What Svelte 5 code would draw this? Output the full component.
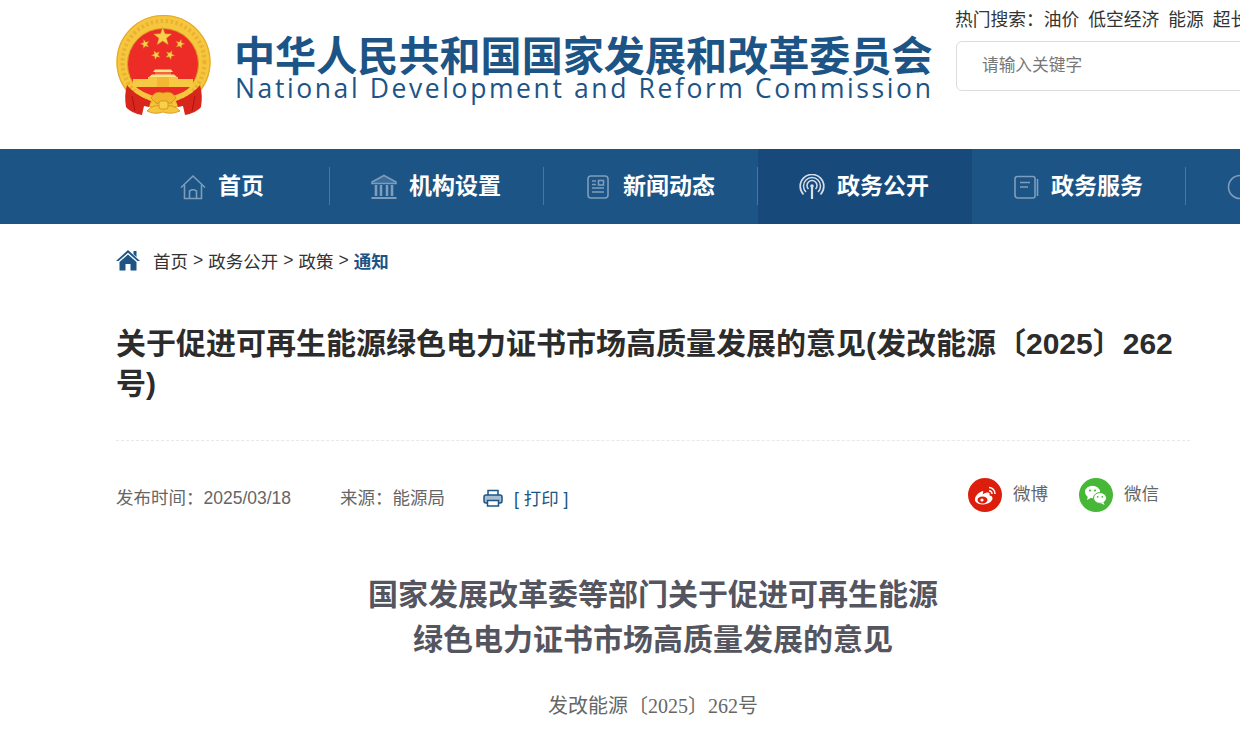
<script lang="ts">
  const hot = ['油价', '低空经济', '能源', '超长期特别国债'];
  const nav = [
    { label: '首页', icon: 'home' },
    { label: '机构设置', icon: 'bank' },
    { label: '新闻动态', icon: 'news' },
    { label: '政务公开', icon: 'signal', active: true },
    { label: '政务服务', icon: 'book' },
    { label: '互动交流', icon: 'chat' }
  ];
  const crumbs = ['首页', '政务公开', '政策'];
  const star = (cx: number, cy: number, r: number, turn = 0) => {
    let pts = '';
    for (let i = 0; i < 10; i++) {
      const a = ((i * 36 - 90 + turn) * Math.PI) / 180;
      const d = i % 2 ? r * 0.42 : r;
      pts += `${(cx + d * Math.cos(a)).toFixed(1)},${(cy + d * Math.sin(a)).toFixed(1)} `;
    }
    return pts;
  };
</script>

<div class="page">
  <header class="head">
    <svg class="emblem" viewBox="0 0 96 102" width="96" height="102">
      <!-- gold ring -->
      <circle cx="48.5" cy="48" r="47" fill="#f6c63d" />
      <circle cx="48.5" cy="48" r="46.5" fill="none" stroke="#e3a92d" stroke-width="1.2" />
      <circle cx="48.5" cy="48" r="41" fill="none" stroke="#eab233" stroke-width="4" stroke-dasharray="2.5 2.5" />
      <circle cx="48" cy="50" r="35.5" fill="#ee2c27" stroke="#d99a22" stroke-width="1" />
      <!-- stars -->
      <g fill="#f9d04a" stroke="#c98f1e" stroke-width="0.4">
        <polygon points={star(47.7, 23, 9.5)} />
        <polygon points={star(30, 30, 4.6, -15)} />
        <polygon points={star(65, 30, 4.6, 15)} />
        <polygon points={star(41, 41, 4.6, -25)} />
        <polygon points={star(55, 41, 4.6, 25)} />
      </g>
      <!-- gate -->
      <path d="M38 58 H58 L56 55.5 H40Z" fill="#fbe58c" />
      <rect x="40" y="58" width="16" height="3" fill="#ee6a3a" />
      <path d="M34 63 L37 60.5 H59 L62 63Z" fill="#fbe58c" />
      <rect x="33" y="63" width="30" height="2" fill="#f6c63d" />
      <path d="M18 65 H78 V73 H18Z" fill="#f7c843" />
      <rect x="42" y="63" width="12" height="10" fill="#f3b833" />
      <!-- ribbons -->
      <path d="M12 71 C15 75 24 83 36 87 L34 93 L29 92 L27 101 C21 100 14 97 11 93 Q9 81 12 71Z" fill="#d9261c" />
      <path d="M85 71 C82 75 73 83 61 87 L63 93 L68 92 L70 101 C76 100 83 97 86 93 Q88 81 85 71Z" fill="#d9261c" />
      <path d="M17 82 L20 97 M80 82 L77 97" stroke="#a9140f" stroke-width="1" fill="none" />
      <!-- knot and wheat -->
      <path d="M22 74 Q48 92 75 74 L78 78 Q48 98 19 78Z" fill="#f6c63d" />
      <path d="M36 84 Q40 76 48 79 Q57 76 61 84 L56 89 L41 89Z" fill="#f2b52d" stroke="#cf8f1c" stroke-width="0.8" />
      <path d="M32 97 Q38 89 48 93 Q58 89 65 97 Q56 101 48 98 Q40 101 32 97Z" fill="#f6c63d" stroke="#cf8f1c" stroke-width="0.8" />
      <rect x="44" y="87" width="9" height="8" rx="2" fill="#f9d04a" stroke="#cf8f1c" stroke-width="0.8" />
    </svg>
    <div class="brand">
      <div class="brand-cn">中华人民共和国国家发展和改革委员会</div>
      <div class="brand-en">National Development and Reform Commission</div>
    </div>
    <div class="search">
      <div class="hot">
        <span>热门搜索：</span>
        {#each hot as word}<span class="hot-word">{word}</span>{/each}
      </div>
      <div class="search-box">请输入关键字</div>
    </div>
  </header>

  <nav class="nav">
    {#each nav as item}
      <div class="nav-item" class:nav-item--active={item.active}>
        <svg class="nav-icon" class:nav-icon--active={item.active} viewBox="0 0 26 26" width="26" height="26" fill="none" stroke="currentColor" stroke-width="1.6">
          {#if item.icon === 'home'}
            <path d="M1 13.5 L13 2 L25 13.5" />
            <path d="M4.5 11 V24.5 H21.5 V11" />
            <path d="M9.5 24.5 V17 Q13 14.5 16.5 17 V24.5" />
          {:else if item.icon === 'bank'}
            <path d="M13 1.5 L25 8 V9.5 H1 V8Z" fill="currentColor" fill-opacity="0.35" />
            <path d="M5 11 V22 M10 11 V22 M16 11 V22 M21 11 V22" stroke-width="2.6" />
            <path d="M0.5 24 H25.5" stroke-width="2" />
          {:else if item.icon === 'news'}
            <rect x="3" y="2" width="20" height="22" rx="3" />
            <path d="M7 7 H11 M7 10.5 H11 M7 14 H19 M7 18 H19" />
            <rect x="13.5" y="6.5" width="5" height="4.5" />
          {:else if item.icon === 'signal'}
            <path d="M13 13 V25" stroke-width="2.2" />
            <circle cx="13" cy="12" r="1.8" fill="currentColor" stroke="none" />
            <path d="M9.5 15 A5 5 0 1 1 16.5 15" stroke-width="1.5" />
            <path d="M7 18 A8.5 8.5 0 1 1 19 18" stroke-width="1.5" />
            <path d="M4.5 20.5 A11.8 11.8 0 1 1 21.5 20.5" stroke-width="1.7" />
          {:else if item.icon === 'book'}
            <path d="M20 2.5 H4.5 Q2 2.5 2 5 V21 Q2 24 5 24 H20 Q22 24 22 22 V4.5 Q22 2.5 20 2.5Z" />
            <path d="M7 8.5 H17 M7 13 H15" />
            <path d="M24.5 5 V22" />
          {:else}
            <circle cx="13" cy="13" r="11.5" />
          {/if}
        </svg>
        <span class="nav-label">{item.label}</span>
      </div>
    {/each}
  </nav>

  <main class="main">
    <div class="crumbs">
      <svg class="crumb-home" viewBox="0 0 24 22" width="24" height="22">
        <path d="M12 1 L24 12 L21.5 12 L12 3.8 L2.5 12 L0 12Z" fill="#1c5486" />
        <path d="M17.5 2 H20.5 V8 L17.5 5.2Z" fill="#1c5486" />
        <path d="M12 5.5 L20.5 13 V21.5 H14.5 V15 H9.5 V21.5 H3.5 V13Z" fill="#1c5486" />
      </svg>
      {#each crumbs as c}<span>{c}</span><span class="crumb-sep">&gt;</span>{/each}
      <b class="crumb-now">通知</b>
    </div>

    <h1 class="title">关于促进可再生能源绿色电力证书市场高质量发展的意见(发改能源〔2025〕262号)</h1>

    <div class="meta">
      <span class="meta-date">发布时间：2025/03/18</span>
      <span class="meta-src">来源：能源局</span>
      <span class="print">
        <svg viewBox="0 0 20 18" width="20" height="18" fill="none" stroke="#1c5486" stroke-width="1.5">
          <path d="M5 6 V1.5 H15 V6" />
          <rect x="1" y="6" width="18" height="8" rx="2" fill="#a9bdd0" />
          <rect x="4.5" y="11.5" width="11" height="5.5" fill="#fff" />
        </svg>
        <span class="print-text">[ 打印 ]</span>
      </span>
      <span class="share">
        <svg viewBox="0 0 34 34" width="34" height="34">
          <circle cx="17" cy="17" r="17" fill="#dc1f0c" />
          <path d="M14.5 13 C9 15 5.5 20 7.5 23.5 C10 27 18 27.5 22.5 24 C26 21 24.5 17.5 21.5 17.5 C22.5 14.5 20 13 14.5 16.5 C15.5 14 15.5 13 14.5 13Z" fill="#fff" />
          <ellipse cx="14.5" cy="22" rx="5" ry="3.4" fill="#dc1f0c" />
          <circle cx="14" cy="22" r="1.6" fill="#fff" />
          <path d="M21 9.5 A6 6 0 0 1 27 16 M21 12.8 A3 3 0 0 1 24 16" fill="none" stroke="#fff" stroke-width="1.5" />
        </svg>
        <span class="share-text">微博</span>
      </span>
      <span class="share">
        <svg viewBox="0 0 34 34" width="34" height="34">
          <circle cx="17" cy="17" r="17" fill="#46b736" />
          <ellipse cx="13.5" cy="14" rx="7.5" ry="6.2" fill="#fff" />
          <path d="M9 18 L8 22 L12.5 19.5Z" fill="#fff" />
          <ellipse cx="21" cy="20" rx="6.5" ry="5.4" fill="#fff" stroke="#46b736" stroke-width="1" />
          <path d="M24.5 24 L25.5 27 L21.5 25Z" fill="#fff" />
          <circle cx="11" cy="12.5" r="1.1" fill="#46b736" />
          <circle cx="16" cy="12.5" r="1.1" fill="#46b736" />
          <circle cx="18.7" cy="18.8" r="0.9" fill="#46b736" />
          <circle cx="23.3" cy="18.8" r="0.9" fill="#46b736" />
        </svg>
        <span class="share-text">微信</span>
      </span>
    </div>

    <article class="article">
      <h2 class="article-title">国家发展改革委等部门关于促进可再生能源<br />绿色电力证书市场高质量发展的意见</h2>
      <p class="doc-no">发改能源〔2025〕262号</p>
    </article>
  </main>
</div>

<style>
  :global(html),
  :global(body) {
    overflow: hidden;
  }

  .page {
    width: 1240px;
    height: 740px;
    overflow: hidden;
    font-family: "Liberation Sans", "Noto Sans CJK SC", sans-serif;
    background: #fff;
  }

  .head {
    display: flex;
    height: 149px;
    padding-left: 116px;
    box-sizing: border-box;
  }
  .emblem {
    flex: none;
    margin: 14px 0 0 -1px;
  }
  .brand {
    flex: none;
    width: 700px;
    margin-left: 23px;
    padding-top: 41px;
    color: #1c5486;
    white-space: nowrap;
  }
  .brand-cn {
    font-size: 41.1px;
    font-weight: 700;
    line-height: 32px;
  }
  .brand-en {
    font-size: 26.5px;
    line-height: 30px;
    letter-spacing: 2.6px;
    margin-left: 1px;
    font-family: "Open Sans", sans-serif;
    font-weight: 400;
  }
  .search {
    flex: none;
    width: 420px;
    margin-left: 22px;
    padding-top: 8px;
  }
  .hot {
    display: flex;
    margin-left: -1px;
    font-size: 17.75px;
    line-height: 24px;
    color: #333;
    white-space: nowrap;
  }
  .hot-word {
    margin-right: 9px;
  }
  .search-box {
    width: 400px;
    height: 50px;
    margin-top: 9px;
    padding-left: 25px;
    box-sizing: border-box;
    border: 1px solid #ddd;
    border-radius: 6px;
    font-size: 16.7px;
    line-height: 48px;
    color: #777;
  }

  .nav {
    display: flex;
    height: 75px;
    padding-left: 116px;
    background: #1c5486;
  }
  .nav-item {
    flex: none;
    position: relative;
    width: 214px;
    box-sizing: border-box;
    padding-right: 2px;
    display: flex;
    align-items: center;
    justify-content: center;
    gap: 12px;
    color: #fff;
    white-space: nowrap;
  }
  .nav-item::after {
    content: '';
    position: absolute;
    right: 0;
    top: 18px;
    height: 38px;
    width: 1px;
    background: #4a769e;
  }
  .nav-item--active {
    background: #174a7b;
  }
  .nav-item--active::after {
    display: none;
  }
  .nav-icon {
    color: #7d9dbb;
  }
  .nav-icon--active {
    color: #d5dfe9;
  }
  .nav-label {
    font-size: 23px;
    font-weight: 700;
    padding-bottom: 6px;
  }

  .main {
    padding: 0 50px 0 116px;
  }
  .crumbs {
    display: flex;
    align-items: center;
    height: 24px;
    margin-top: 24px;
    font-size: 17.5px;
    color: #333;
  }
  .crumb-home {
    margin-right: 13px;
  }
  .crumb-sep {
    margin: 0 5px;
  }
  .crumb-now {
    color: #1c5486;
  }

  .title {
    margin: 52px 0 0;
    width: 1074px;
    font-size: 30px;
    line-height: 40px;
    font-weight: 700;
    color: #2c2c2c;
    padding-bottom: 36px;
    border-bottom: 1px dashed #e8e8e8;
  }

  .meta {
    display: flex;
    align-items: center;
    height: 34px;
    margin-top: 37px;
    font-size: 17.5px;
    color: #666;
    white-space: nowrap;
  }
  .meta-date {
    width: 224px;
    margin-top: 2px;
  }
  .meta-src {
    width: 143px;
    margin-top: 2px;
  }
  .print {
    display: flex;
    align-items: center;
    width: 485px;
    margin-top: 5px;
    color: #1c5486;
  }
  .print-text {
    margin-left: 11px;
  }
  .share {
    display: flex;
    align-items: center;
    width: 111px;
    color: #666;
  }
  .share-text {
    margin-left: 11px;
    padding-bottom: 6px;
  }

  .article {
    margin-top: 60px;
    width: 1074px;
    text-align: center;
  }
  .article-title {
    margin: 0;
    font-size: 30px;
    line-height: 45px;
    font-weight: 700;
    color: #55555f;
  }
  .doc-no {
    margin: 30px 0 0;
    font-family: "Liberation Serif", "Noto Sans CJK SC", serif;
    font-size: 20px;
    line-height: 28px;
    color: #666;
  }
</style>
